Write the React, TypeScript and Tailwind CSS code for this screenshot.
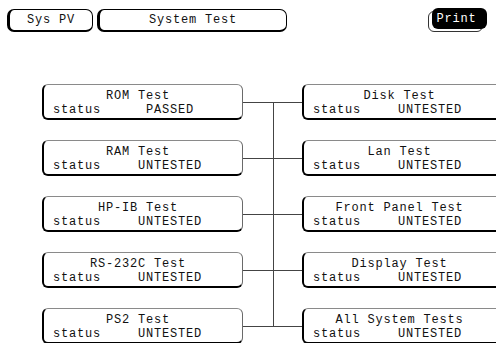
const leftTests = [
  { title: 'ROM Test', value: 'PASSED' },
  { title: 'RAM Test', value: 'UNTESTED' },
  { title: 'HP-IB Test', value: 'UNTESTED' },
  { title: 'RS-232C Test', value: 'UNTESTED' },
  { title: 'PS2 Test', value: 'UNTESTED' },
]

const rightTests = [
  { title: 'Disk Test', value: 'UNTESTED' },
  { title: 'Lan Test', value: 'UNTESTED' },
  { title: 'Front Panel Test', value: 'UNTESTED' },
  { title: 'Display Test', value: 'UNTESTED' },
  { title: 'All System Tests', value: 'UNTESTED' },
]

function TestBox({ title, value, wide }: { title: string; value: string; wide?: boolean }) {
  return (
    <div
      className={`${wide ? 'w-[210px] pr-[16px]' : 'w-[201px] pr-[10px]'} h-[36px] shrink-0 rounded-[6px] border-t border-r border-t-[#8a8a8a] border-r-[#6a6a6a] border-l-[2px] border-b-[2px] border-l-black border-b-black pt-[4px] leading-[14px]`}
    >
      <div className="text-center whitespace-pre">{title}</div>
      <div className="flex whitespace-pre">
        <span className="w-[74px] pl-[9px] shrink-0">status</span>
        <span className="w-[104px] text-center shrink-0">{value}</span>
      </div>
    </div>
  )
}

function Connector({ first, last }: { first: boolean; last: boolean }) {
  return (
    <div className="w-[59px] shrink-0 flex flex-col h-full">
      <div className={`h-[18px] ml-[30px] ${first ? '' : 'border-l border-[#444]'}`} />
      <div className="h-px bg-[#444]" />
      <div className={`flex-1 ml-[30px] ${last ? '' : 'border-l border-[#444]'}`} />
    </div>
  )
}

export default function App() {
  return (
    <div className="w-[496px] h-[343px] overflow-hidden bg-white text-[#111] text-[12px] tracking-[0.8px] font-['Liberation_Mono','DejaVu_Sans_Mono',monospace]">
      <div className="flex items-start h-[32px] pt-[9px] pl-[7px]">
        <div className="w-[86px] h-[23px] flex items-center justify-center rounded-[7px] border-t border-r border-l-[3px] border-b-[2px] border-black">
          Sys PV
        </div>
        <div className="ml-[4px] w-[190px] h-[23px] flex items-center justify-center rounded-[7px] border-t border-r border-l-[3px] border-b-[2px] border-black">
          System Test
        </div>
        <div className="relative ml-auto mr-[9px] -mt-[1px] w-[55px] h-[21px]">
          <div className="absolute left-[-4px] top-[3px] w-[55px] h-[21px] rounded-[6px] border border-[#333]" />
          <div className="relative w-[55px] h-[21px] rounded-[6px] bg-black text-white flex items-center justify-center pr-[6px]">
            Print
          </div>
        </div>
      </div>

      <div className="mt-[52px] pl-[42px] flex flex-col">
        {leftTests.map((l, i) => {
          const last = i === leftTests.length - 1
          return (
            <div key={l.title} className={`flex ${last ? 'h-[36px]' : 'h-[56px]'}`}>
              <TestBox title={l.title} value={l.value} />
              <Connector first={i === 0} last={last} />
              <TestBox title={rightTests[i].title} value={rightTests[i].value} wide />
            </div>
          )
        })}
      </div>
    </div>
  )
}
